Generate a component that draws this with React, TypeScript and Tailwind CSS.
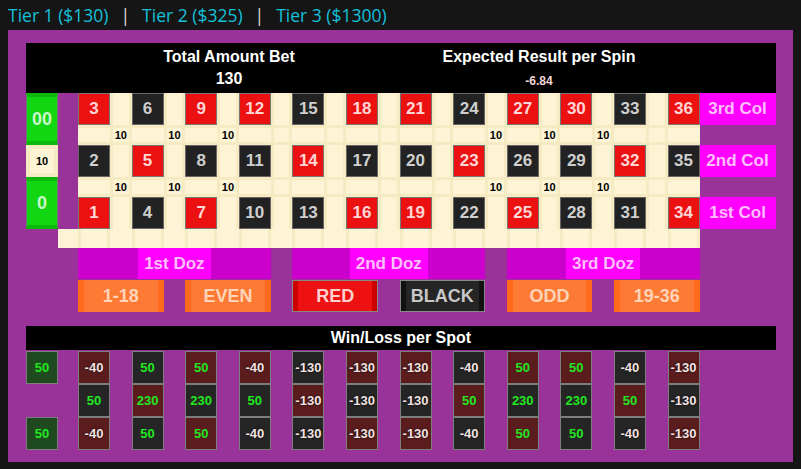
import React from 'react';

const ROWS = [
  [3, 6, 9, 12, 15, 18, 21, 24, 27, 30, 33, 36],
  [2, 5, 8, 11, 14, 17, 20, 23, 26, 29, 32, 35],
  [1, 4, 7, 10, 13, 16, 19, 22, 25, 28, 31, 34],
];

const REDS = new Set([1, 3, 5, 7, 9, 12, 14, 16, 18, 19, 21, 23, 25, 27, 30, 32, 34, 36]);

// corner bets sit in the gap right of these columns
const CORNER_COLS = [0, 1, 2, 7, 8, 9];

const WIN_LOSS = [
  [-40, 50, 50, -40, -130, -130, -130, -40, 50, 50, -40, -130],
  [50, 230, 230, 50, -130, -130, -130, 50, 230, 230, 50, -130],
  [-40, 50, 50, -40, -130, -130, -130, -40, 50, 50, -40, -130],
];

const DOZENS = ['1st Doz', '2nd Doz', '3rd Doz'];
const COLUMNS = ['3rd Col', '2nd Col', '1st Col'];

const OUTSIDE = [
  { label: '1-18', kind: 'orange' },
  { label: 'EVEN', kind: 'orange' },
  { label: 'RED', kind: 'red' },
  { label: 'BLACK', kind: 'black' },
  { label: 'ODD', kind: 'orange' },
  { label: '19-36', kind: 'orange' },
];

function BoardGrid() {
  const items: React.ReactNode[] = [];
  for (let r = 0; r < 5; r++) {
    for (let c = 0; c < 23; c++) {
      const key = `${r}-${c}`;
      if (r % 2 === 0 && c % 2 === 0) {
        const n = ROWS[r / 2][c / 2];
        const red = REDS.has(n);
        items.push(
          <div
            key={key}
            className={
              red
                ? 'flex items-center justify-center border border-[#777] bg-[#ec1111] text-[17px] font-bold text-[#ffd6d6]'
                : 'flex items-center justify-center border border-[#666] bg-[#222] text-[17px] font-bold text-[#cfcfcf]'
            }
          >
            {n}
          </div>
        );
      } else if (r % 2 === 0) {
        items.push(<div key={key} className="border-x-[3px] border-[#f6eac3]" />);
      } else if (c % 2 === 0) {
        items.push(<div key={key} className="border-y-[3px] border-[#f6eac3]" />);
      } else {
        const hasBet = CORNER_COLS.includes((c - 1) / 2);
        items.push(
          <div key={key} className="flex items-center justify-center border-[3px] border-[#f6eac3] text-[11px] font-bold text-black">
            {hasBet ? '10' : ''}
          </div>
        );
      }
    }
  }
  return (
    <div className="grid grid-cols-[repeat(11,32px_21.6px)_32px] grid-rows-[32px_20px_32px_20px_32px] bg-[#fdf4d6]">
      {items}
    </div>
  );
}

function BottomStrip() {
  return (
    <div className="flex h-[19px] bg-[#fdf4d6]">
      <div className="w-[20px]" />
      <div className="grid grid-cols-[repeat(11,32px_21.6px)_32px]">
        {Array.from({ length: 23 }).map((_, i) => (
          <div key={i} className={i % 2 === 0 ? 'border-x-[3px] border-[#f6eac3]' : ''} />
        ))}
      </div>
    </div>
  );
}

function OutsideBet({ label, kind }: { label: string; kind: string }) {
  if (kind === 'red') {
    return (
      <div className="flex w-[85.6px] items-center justify-center border-x-[6px] border-x-[#cc0000] bg-[#ee1111] text-[18px] font-bold text-[#ffd0d0] outline outline-1 outline-[#888] -outline-offset-1">
        {label}
      </div>
    );
  }
  if (kind === 'black') {
    return (
      <div className="flex w-[85.6px] items-center justify-center border-x-[6px] border-x-[#111] bg-[#252525] text-[18px] font-bold text-[#c8c8c8] outline outline-1 outline-[#888] -outline-offset-1">
        {label}
      </div>
    );
  }
  return (
    <div className="flex w-[85.6px] items-center justify-center border-x-[6px] border-x-[#ff6a1c] bg-[#fd7a35] text-[18px] font-bold text-[#ffd4b8]">
      {label}
    </div>
  );
}

function WinCell({ value, red, green }: { value: number; red?: boolean; green?: boolean }) {
  const bg = green ? 'bg-[#1f4a1f]' : red ? 'bg-[#5a1c1c]' : 'bg-[#252525]';
  const text = value > 0 ? 'text-[#22e622]' : 'text-[#f5e2e2] [text-shadow:0_0_2px_#000]';
  return (
    <div className={`flex h-[33px] w-[32px] items-center justify-center border border-[#7d7d7d] text-[13px] font-bold ${bg} ${text}`}>
      {value}
    </div>
  );
}

export default function App() {
  return (
    <div className="h-[469px] w-[801px] overflow-hidden bg-[#151515] font-['Liberation_Sans',Arial,sans-serif]">
      <div className="flex h-[30px] items-center px-[8px] font-['Open_Sans',sans-serif] text-[17.5px] text-[#14c0da]">
        <span>Tier 1 ($130)</span>
        <span className="mx-[12px] text-[#dddddd]">|</span>
        <span>Tier 2 ($325)</span>
        <span className="mx-[12px] text-[#dddddd]">|</span>
        <span>Tier 3 ($1300)</span>
      </div>

      <div className="mx-[8px] h-[432px] bg-[#993399] pl-[18px] pt-[13px]">
        {/* totals */}
        <div className="flex h-[50px] w-[750px] bg-black pt-[5px] font-bold text-white">
          <div className="w-[406px] text-center">
            <div className="text-[16px] leading-[18px]">Total Amount Bet</div>
            <div className="mt-[4px] text-[16px] leading-[18px]">130</div>
          </div>
          <div className="w-[214px] text-center">
            <div className="text-[16px] leading-[18px]">Expected Result per Spin</div>
            <div className="mt-[8px] text-[12px] leading-[14px] text-[#f5d6d6]">-6.84</div>
          </div>
        </div>

        {/* board */}
        <div className="flex">
          <div className="flex w-[32px] flex-col">
            <div className="flex h-[52px] items-center justify-center border-x border-x-[#777] border-y-[4px] border-y-[#0db80d] bg-[#11d611] text-[18px] font-bold text-[#c9f7c9]">
              00
            </div>
            <div className="flex h-[32px] items-center justify-center border-[4px] border-[#f6eac3] bg-[#fdf4d6] text-[11px] font-bold text-black">
              10
            </div>
            <div className="flex h-[52px] items-center justify-center border-x border-x-[#777] border-y-[4px] border-y-[#0db80d] bg-[#11d611] text-[18px] font-bold text-[#c9f7c9]">
              0
            </div>
          </div>
          <div className="flex flex-col">
            <div className="flex">
              <div className="w-[20px]" />
              <BoardGrid />
            </div>
            <BottomStrip />
          </div>
          <div className="flex w-[76px] flex-col gap-[20px]">
            {COLUMNS.map((c) => (
              <div key={c} className="flex h-[32px] items-center justify-center bg-[#ff00ff] text-[17px] font-bold text-[#ffbfff]">
                {c}
              </div>
            ))}
          </div>
        </div>

        {/* outside bets */}
        <div className="ml-[52px] flex h-[31px] gap-[21.6px]">
          {DOZENS.map((d) => (
            <div key={d} className="flex w-[192.8px] justify-center bg-[#cc00cc]">
              <span className="flex items-center bg-[#ff00ff] px-[6px] text-[17px] font-bold text-[#ffbfff]">{d}</span>
            </div>
          ))}
        </div>
        <div className="ml-[52px] mt-[1px] flex h-[32px] gap-[21.6px]">
          {OUTSIDE.map((o) => (
            <OutsideBet key={o.label} label={o.label} kind={o.kind} />
          ))}
        </div>

        {/* win / loss */}
        <div className="mt-[14px] flex h-[24px] w-[750px] items-center justify-center bg-black text-[16px] font-bold text-white">
          Win/Loss per Spot
        </div>
        <div className="mt-[1px] flex">
          <div className="flex w-[32px] flex-col">
            <WinCell value={50} green />
            <div className="h-[33px]" />
            <WinCell value={50} green />
          </div>
          <div className="ml-[20px] flex gap-[21.6px]">
            {ROWS[0].map((_, c) => (
              <div key={c} className="flex flex-col">
                {WIN_LOSS.map((row, r) => (
                  <WinCell key={r} value={row[c]} red={REDS.has(ROWS[r][c])} />
                ))}
              </div>
            ))}
          </div>
        </div>
      </div>
    </div>
  );
}
